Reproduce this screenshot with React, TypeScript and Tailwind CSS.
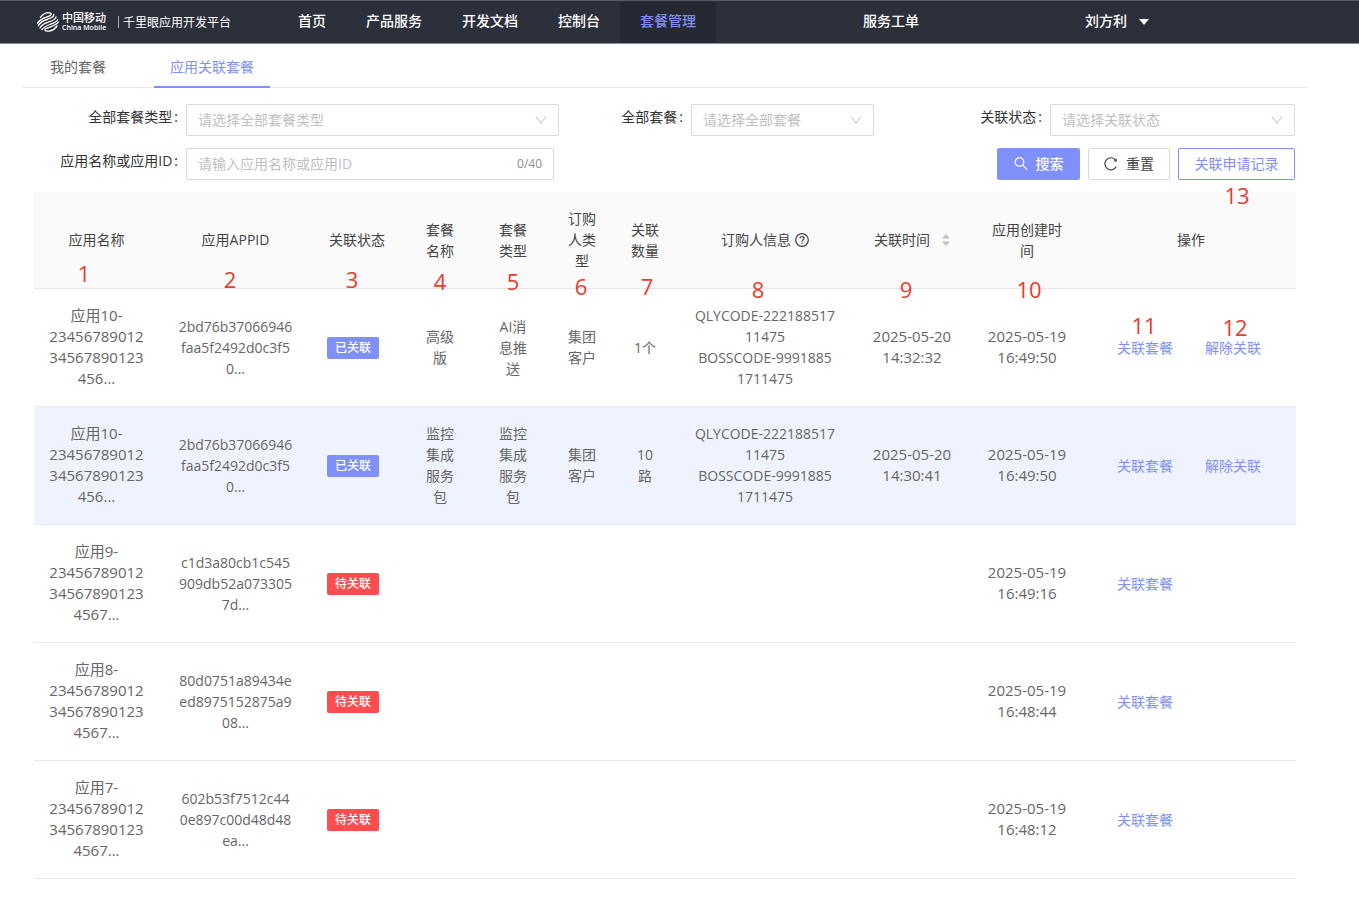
import React from 'react';
import clsx from 'clsx';

type AppRow = {
  name: string;
  appId: string;
  linked: boolean;
  packageName?: string;
  packageType?: string;
  buyerType?: string;
  count?: string;
  buyer?: string;
  linkedAt?: string;
  createdAt: string;
  marked?: boolean;
};

const navItems = ['首页', '产品服务', '开发文档', '控制台', '套餐管理'];

const columns = [
  { title: '应用名称', width: 'w-[125px]', mark: 'left-9 top-[69px]' },
  { title: '应用APPID', width: 'w-[153px]', mark: 'left-[57px] top-[75px]' },
  { title: '关联状态', width: 'w-[90px]', mark: 'left-[26px] top-[75px]' },
  { title: '套餐\n名称', width: 'w-[76px]', mark: 'left-[24px] top-[77px]' },
  { title: '套餐\n类型', width: 'w-[70px]', mark: 'left-[21px] top-[77px]' },
  { title: '订购\n人类\n型', width: 'w-[68px]', mark: 'left-[19px] top-[82px]' },
  { title: '关联\n数量', width: 'w-[58px]', mark: 'left-[17px] top-[82px]' },
  { title: '订购人信息', width: 'w-[182px]', mark: 'left-[70px] top-[85px]', icon: 'help' },
  { title: '关联时间', width: 'w-[112px]', mark: 'left-[36px] top-[85px]', icon: 'sort' },
  { title: '应用创建时\n间', width: 'w-[118px]', mark: 'left-[47px] top-[85px]' },
  { title: '操作', width: 'w-[210px]' },
];

const rows: AppRow[] = [
  {
    name: '应用10-\n23456789012\n34567890123\n456...',
    appId: '2bd76b37066946\nfaa5f2492d0c3f5\n0...',
    linked: true,
    packageName: '高级\n版',
    packageType: 'AI消\n息推\n送',
    buyerType: '集团\n客户',
    count: '1个',
    buyer: 'QLYCODE-222188517\n11475\nBOSSCODE-9991885\n1711475',
    linkedAt: '2025-05-20\n14:32:32',
    createdAt: '2025-05-19\n16:49:50',
    marked: true,
  },
  {
    name: '应用10-\n23456789012\n34567890123\n456...',
    appId: '2bd76b37066946\nfaa5f2492d0c3f5\n0...',
    linked: true,
    packageName: '监控\n集成\n服务\n包',
    packageType: '监控\n集成\n服务\n包',
    buyerType: '集团\n客户',
    count: '10\n路',
    buyer: 'QLYCODE-222188517\n11475\nBOSSCODE-9991885\n1711475',
    linkedAt: '2025-05-20\n14:30:41',
    createdAt: '2025-05-19\n16:49:50',
  },
  {
    name: '应用9-\n23456789012\n34567890123\n4567...',
    appId: 'c1d3a80cb1c545\n909db52a073305\n7d...',
    linked: false,
    createdAt: '2025-05-19\n16:49:16',
  },
  {
    name: '应用8-\n23456789012\n34567890123\n4567...',
    appId: '80d0751a89434e\ned8975152875a9\n08...',
    linked: false,
    createdAt: '2025-05-19\n16:48:44',
  },
  {
    name: '应用7-\n23456789012\n34567890123\n4567...',
    appId: '602b53f7512c44\n0e897c00d48d48\nea...',
    linked: false,
    createdAt: '2025-05-19\n16:48:12',
  },
];

const Marker = ({ children, className }: { children: React.ReactNode; className: string }) => (
  <span
    className={clsx(
      'absolute z-10 w-7 text-center text-[22px] leading-6 font-medium text-[#ec3a2e] pointer-events-none',
      className,
    )}
  >
    {children}
  </span>
);

const Logo = () => (
  <svg className="w-[22px] h-5" viewBox="0 0 66 60" fill="none" stroke="#fff" strokeWidth="4" strokeLinecap="round" strokeLinejoin="round">
    <path d="M10 16C18 6 27 2 35 2c6 0 9 3 6 7-5 6-16 6-24 11C10 24 4 28 2 34" />
    <path d="M50 7c2 9-8 11-17 14C20 25 10 31 4 41" />
    <path d="M57 15c-1 8-10 11-19 14C25 33 14 39 9 48" />
    <path d="M62 22c-2 8-11 11-20 14-13 5-22 9-27 17" />
    <path d="M64 30c-4 7-12 10-20 13-10 4-22 6-20 11 1 4 8 4 14 3 9-2 17-8 22-15" />
  </svg>
);

const Header = () => (
  <header className="flex h-11 items-center border-t border-b border-t-[#555b68] border-b-[#8c8c96] bg-[#2c303b] text-sm font-medium text-white">
    <div className="flex w-[278px] shrink-0 items-center pl-[37px]">
      <Logo />
      <div className="ml-[3px] flex w-11 flex-col whitespace-nowrap">
        <span className="text-[11px] leading-3 font-medium">中国移动</span>
        <span className="text-[7px] leading-2 font-semibold">China Mobile</span>
      </div>
      <span className="ml-3 h-3 w-px bg-[#a6a8ad]" />
      <span className="ml-1 pt-0.5 text-xs font-normal whitespace-nowrap">千里眼应用开发平台</span>
    </div>
    <nav className="flex h-full">
      {navItems.map((item) => (
        <a
          key={item}
          href="#"
          className={clsx(
            'flex h-full items-center px-5 pb-0.5 whitespace-nowrap',
            item === '套餐管理' && 'bg-[#262833] text-[#7f8df0]',
          )}
        >
          {item}
        </a>
      ))}
    </nav>
    <div className="flex flex-1 items-center justify-between pr-[210px] pb-0.5 pl-[147px] whitespace-nowrap">
      <a href="#">服务工单</a>
      <button className="flex items-center gap-3">
        刘方利
        <svg className="mt-0.5 h-[6px] w-[10px]" viewBox="0 0 10 6" fill="currentColor">
          <path d="M0 0h10L5 6z" />
        </svg>
      </button>
    </div>
  </header>
);

const SelectField = ({ id, label, placeholder, labelWidth }: { id: string; label: string; placeholder: string; labelWidth: string }) => (
  <div className="flex">
    <label htmlFor={id} className={clsx('pt-[3px] pr-2 text-right whitespace-nowrap text-[#333]', labelWidth)}>
      {label}<span className="ml-0.5">:</span>
    </label>
    <div className="relative flex-1">
      <select
        id={id}
        defaultValue=""
        className="h-8 w-full appearance-none rounded-xs border border-[#d9d9d9] bg-white px-[11px] text-[#bfbfbf] outline-none"
      >
        <option value="">{placeholder}</option>
      </select>
      <svg className="pointer-events-none absolute top-3 right-3 h-2 w-3" viewBox="0 0 12 8" fill="none" stroke="#bfbfbf">
        <path d="M1 0.5L6 7.2L11 0.5" />
      </svg>
    </div>
  </div>
);

const Filters = () => (
  <form className="grid grid-cols-[525fr_315fr_421fr] gap-y-3" onSubmit={(e) => e.preventDefault()}>
    <SelectField id="package-type" label="全部套餐类型" placeholder="请选择全部套餐类型" labelWidth="w-[152px]" />
    <SelectField id="package" label="全部套餐" placeholder="请选择全部套餐" labelWidth="w-[132px]" />
    <SelectField id="link-status" label="关联状态" placeholder="请选择关联状态" labelWidth="w-[176px]" />

    <div className="flex pr-[5px]">
      <label htmlFor="app-keyword" className="w-[152px] pt-[3px] pr-2 text-right whitespace-nowrap text-[#333]">
        应用名称或应用ID<span className="ml-0.5">:</span>
      </label>
      <div className="flex h-8 flex-1 items-center rounded-xs border border-[#d9d9d9] px-[11px]">
        <input
          id="app-keyword"
          type="text"
          maxLength={40}
          placeholder="请输入应用名称或应用ID"
          className="min-w-0 flex-1 outline-none placeholder:text-[#bfbfbf]"
        />
        <span className="text-xs text-[#8c8c8c]">0/40</span>
      </div>
    </div>
    <div className="col-span-2 flex justify-end gap-2">
      <button className="flex h-8 w-[83px] items-center justify-center gap-2 rounded-xs bg-[#8090fb] font-medium text-white">
        <svg className="h-[14px] w-[14px]" viewBox="0 0 14 14" fill="none" stroke="currentColor" strokeWidth="1.2">
          <circle cx="5.5" cy="5" r="4.3" />
          <path d="M8.5 8.1L13.3 12.6" />
        </svg>
        搜索
      </button>
      <button type="reset" className="flex h-8 w-[82px] items-center justify-center gap-2 rounded-xs border border-[#d9d9d9] text-[#444]">
        <svg className="h-[14px] w-[14px]" viewBox="0 0 14 14" fill="none" stroke="currentColor" strokeWidth="1.2">
          <path d="M12.3 9.4A6 6 0 1 1 11.4 2.8" />
          <path d="M12.8 1.2V4.4H9.4z" fill="currentColor" stroke="none" />
        </svg>
        重置
      </button>
      <div className="relative">
        <button type="button" className="h-8 w-[117px] rounded-xs border border-[#8090fb] text-[#8090fb]">
          关联申请记录
        </button>
        <Marker className="top-[35px] left-[45px]">13</Marker>
      </div>
    </div>
  </form>
);

const HelpIcon = () => (
  <svg className="h-[14px] w-[14px]" viewBox="0 0 14 14" fill="none" stroke="currentColor" strokeWidth="1.2">
    <circle cx="7" cy="7" r="6.3" />
    <path d="M5 5.6C5 4.4 5.8 3.7 7 3.7s2 .7 2 1.8C9 6.8 7 6.9 7 8.5M7 9.6V10.8" />
  </svg>
);

const SortIcon = () => (
  <svg className="h-3 w-2" viewBox="0 0 8 12" fill="#bfbfbf">
    <path d="M4 0L8 4.5H0zM4 12L0 7.5h8z" />
  </svg>
);

const StatusTag = ({ linked }: { linked: boolean }) => (
  <span
    className={clsx(
      'mr-2 inline-block h-[22px] rounded-xs px-2 text-xs leading-[22px] font-medium text-white',
      linked ? 'bg-[#8090fb]' : 'bg-[#ff4d4f]',
    )}
  >
    {linked ? '已关联' : '待关联'}
  </span>
);

const AppTable = () => (
  <table className="w-full table-fixed border-collapse text-center leading-[21px] whitespace-pre">
    <colgroup>
      {columns.map((col) => (
        <col key={col.title} className={col.width} />
      ))}
    </colgroup>
    <thead className="bg-[#fafafa] text-[#444]">
      <tr className="h-24 border-b border-[#e8e8e8]">
        {columns.map((col, i) => (
          <th key={col.title} className="relative p-0 font-normal">
            <div className="flex items-center justify-center">
              {col.title}
              {col.icon === 'help' && <span className="ml-1"><HelpIcon /></span>}
              {col.icon === 'sort' && <span className="ml-3"><SortIcon /></span>}
            </div>
            {col.mark && <Marker className={col.mark}>{i + 1}</Marker>}
          </th>
        ))}
      </tr>
    </thead>
    <tbody className="text-[#666]">
      {rows.map((row, i) => (
        <tr key={i} className={clsx('h-[118px] border-b border-[#e8e8e8]', i === 1 && 'bg-[#eff3ff]')}>
          <td className="text-[15px]">{row.name}</td>
          <td>{row.appId}</td>
          <td><StatusTag linked={row.linked} /></td>
          <td>{row.packageName}</td>
          <td>{row.packageType}</td>
          <td>{row.buyerType}</td>
          <td>{row.count}</td>
          <td>{row.buyer}</td>
          <td className="text-[15px]">{row.linkedAt}</td>
          <td className="text-[15px]">{row.createdAt}</td>
          <td>
            <div className="flex gap-8 pl-[31px] text-[#8090fb]">
              <div className="relative">
                <a href="#">关联套餐</a>
                {row.marked && <Marker className="-top-6 left-[13px]">11</Marker>}
              </div>
              {row.linked && (
                <div className="relative">
                  <a href="#">解除关联</a>
                  {row.marked && <Marker className="-top-[22px] left-4">12</Marker>}
                </div>
              )}
            </div>
          </td>
        </tr>
      ))}
    </tbody>
  </table>
);

export default function App() {
  return (
    <div className="min-h-screen bg-white font-['Open_Sans','Noto_Sans_CJK_SC',sans-serif] text-sm">
      <Header />
      <div className="mr-[52px] ml-[22px] flex h-11 gap-8 border-b border-[#e8e8e8] pl-3">
        <button className="-mb-px border-b-2 border-transparent px-4 pt-1 text-[#666]">我的套餐</button>
        <button className="-mb-px border-b-2 border-[#8090fb] px-4 pt-1 text-[#8090fb]">应用关联套餐</button>
      </div>
      <main className="mr-16 ml-[34px] pt-4 pb-7">
        <Filters />
        <div className="mt-3">
          <AppTable />
        </div>
      </main>
    </div>
  );
}
